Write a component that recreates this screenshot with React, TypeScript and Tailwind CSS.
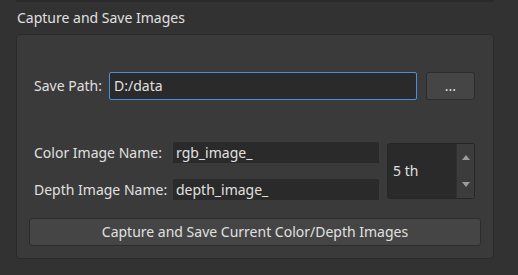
import React from "react";

export default function App() {
  const font = { fontFamily: '"Noto Sans", "Open Sans", sans-serif' };
  return (
    <div
      className="w-[518px] h-[275px] bg-[#323232] text-[#e0e0e0] text-[14px] leading-none overflow-hidden"
      style={font}
    >
      <div className="ml-4 w-[478px] h-[2px] bg-[#2a2a2a]" />
      <div className="h-[32px] pl-[17px] flex items-center">Capture and Save Images</div>
      <div className="ml-4 w-[478px] h-[225px] border border-[#2a2a2a] rounded-[4px] bg-[#3a3a3a] flex flex-col">
        <div className="mt-[37px] pl-[17px] flex items-center">
          <div className="w-[75px]">Save Path:</div>
          <div className="w-[308px] h-[28px] bg-[#2a2a2a] border border-[#4a90d9] rounded-[2px] flex items-center pl-[4px]">
            D:/data
          </div>
          <div className="ml-[9px] w-[49px] h-[28px] bg-[#454545] border border-[#2c2c2c] rounded-[3px] flex items-center justify-center">
            ...
          </div>
        </div>
        <div className="mt-[42px] pl-[17px] flex items-start">
          <div className="flex flex-col gap-[16px]">
            <div className="flex items-center">
              <div className="w-[139px]">Color Image Name:</div>
              <div className="w-[206px] h-[21px] bg-[#2a2a2a] flex items-center pl-[3px]">rgb_image_</div>
            </div>
            <div className="flex items-center">
              <div className="w-[139px]">Depth Image Name:</div>
              <div className="w-[206px] h-[21px] bg-[#2a2a2a] flex items-center pl-[3px]">depth_image_</div>
            </div>
          </div>
          <div className="ml-[8px] mt-[1px] w-[88px] h-[56px] bg-[#2a2a2a] border border-[#262626] rounded-[3px] flex">
            <div className="flex-1 flex items-center pl-[5px]">5 th</div>
            <div className="w-[18px] bg-[#3c3c3c] border-l border-[#303030] flex flex-col">
              <div className="flex-1 flex items-center justify-center">
                <svg width="8" height="5" viewBox="0 0 8 5">
                  <polygon points="0,5 8,5 4,0" fill="#9c9c9c" />
                </svg>
              </div>
              <div className="flex-1 flex items-center justify-center">
                <svg width="8" height="5" viewBox="0 0 8 5">
                  <polygon points="0,0 8,0 4,5" fill="#9c9c9c" />
                </svg>
              </div>
            </div>
          </div>
        </div>
        <div className="mt-[18px] ml-[12px] w-[452px] h-[28px] bg-[#454545] border border-[#2c2c2c] rounded-[3px] flex items-center justify-center">
          Capture and Save Current Color/Depth Images
        </div>
      </div>
    </div>
  );
}
